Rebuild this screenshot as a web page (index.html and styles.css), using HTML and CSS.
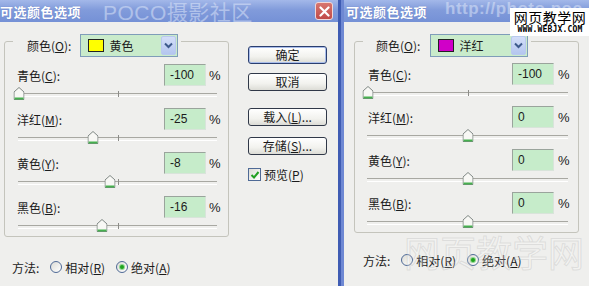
FILE: index.html
```html
<!DOCTYPE html>
<html lang="zh">

<head>
    <meta charset="UTF-8">
    <title>可选颜色选项</title>
    <link rel="stylesheet" href="styles.css">
</head>

<body>
    <div class="screen">
        <!-- 左侧对话框：黄色 -->
        <section class="dialog dialog-left">
            <header class="titlebar">
                <span class="title">可选颜色选项</span>
                <span class="watermark">POCO摄影社区</span>
                <span class="close-btn">
                    <svg width="11" height="11" viewBox="0 0 11 11"><path d="M1.5 1.5 L9.5 9.5 M9.5 1.5 L1.5 9.5" stroke="#fff" stroke-width="2.2" stroke-linecap="round"/></svg>
                </span>
            </header>
            <div class="dialog-body">
                <div class="main-col">
                    <div class="group">
                        <div class="group-head">
                            <span class="label">颜色(<u>O</u>):</span>
                            <div class="dropdown">
                                <span class="swatch swatch-yellow"></span>
                                <span class="dd-text">黄色</span>
                                <span class="dd-arrow">
                                    <svg width="9" height="7" viewBox="0 0 9 7"><path d="M1 1.5 L4.5 5 L8 1.5" stroke="#3d5a8c" stroke-width="2" fill="none"/></svg>
                                </span>
                            </div>
                        </div>
                        <div class="adjust">
                            <div class="adjust-row"><span class="label">青色(<u>C</u>):</span><span class="num">-100</span><span class="pct">%</span></div>
                            <div class="slider"><span class="tick"></span><span class="thumb" style="left: 0%"><svg width="11" height="13" viewBox="0 0 11 13"><path d="M0.5 5 L5.5 0.5 L10.5 5 V12.5 H0.5 Z" fill="#f8f8f5" stroke="#7f8784"/><path d="M1 11.5 H10" stroke="#46b04f" stroke-width="2"/></svg></span></div>
                        </div>
                        <div class="adjust">
                            <div class="adjust-row"><span class="label">洋红(<u>M</u>):</span><span class="num">-25</span><span class="pct">%</span></div>
                            <div class="slider"><span class="tick"></span><span class="thumb" style="left: 37.5%"><svg width="11" height="13" viewBox="0 0 11 13"><path d="M0.5 5 L5.5 0.5 L10.5 5 V12.5 H0.5 Z" fill="#f8f8f5" stroke="#7f8784"/><path d="M1 11.5 H10" stroke="#46b04f" stroke-width="2"/></svg></span></div>
                        </div>
                        <div class="adjust">
                            <div class="adjust-row"><span class="label">黄色(<u>Y</u>):</span><span class="num">-8</span><span class="pct">%</span></div>
                            <div class="slider"><span class="tick"></span><span class="thumb" style="left: 46%"><svg width="11" height="13" viewBox="0 0 11 13"><path d="M0.5 5 L5.5 0.5 L10.5 5 V12.5 H0.5 Z" fill="#f8f8f5" stroke="#7f8784"/><path d="M1 11.5 H10" stroke="#46b04f" stroke-width="2"/></svg></span></div>
                        </div>
                        <div class="adjust">
                            <div class="adjust-row"><span class="label">黑色(<u>B</u>):</span><span class="num">-16</span><span class="pct">%</span></div>
                            <div class="slider"><span class="tick"></span><span class="thumb" style="left: 42%"><svg width="11" height="13" viewBox="0 0 11 13"><path d="M0.5 5 L5.5 0.5 L10.5 5 V12.5 H0.5 Z" fill="#f8f8f5" stroke="#7f8784"/><path d="M1 11.5 H10" stroke="#46b04f" stroke-width="2"/></svg></span></div>
                        </div>
                    </div>
                    <div class="method">
                        <span class="method-label">方法:</span>
                        <span class="radio"></span><span class="radio-text">相对(<u>R</u>)</span>
                        <span class="radio radio-on"></span><span class="radio-text">绝对(<u>A</u>)</span>
                    </div>
                </div>
                <div class="buttons">
                    <button class="btn btn-default">确定</button>
                    <button class="btn">取消</button>
                    <button class="btn btn-gap">载入(<u>L</u>)...</button>
                    <button class="btn">存储(<u>S</u>)...</button>
                    <div class="preview">
                        <span class="check"><svg width="10" height="10" viewBox="0 0 10 10"><path d="M1.5 5 L4 7.5 L8.5 2" stroke="#22a022" stroke-width="2" fill="none"/></svg></span>
                        <span>预览(<u>P</u>)</span>
                    </div>
                </div>
            </div>
        </section>

        <!-- 右侧对话框：洋红 -->
        <section class="dialog dialog-right">
            <header class="titlebar">
                <span class="title">可选颜色选项</span>
                <span class="watermark watermark-url">http://photo.poc</span>
            </header>
            <div class="site-badge">
                <span class="badge-name">网页教学网</span>
                <span class="badge-url">WWW.WEBJX.COM</span>
            </div>
            <div class="dialog-body">
                <div class="main-col">
                    <div class="group">
                        <div class="group-head">
                            <span class="label">颜色(<u>O</u>):</span>
                            <div class="dropdown">
                                <span class="swatch swatch-magenta"></span>
                                <span class="dd-text">洋红</span>
                                <span class="dd-arrow">
                                    <svg width="9" height="7" viewBox="0 0 9 7"><path d="M1 1.5 L4.5 5 L8 1.5" stroke="#3d5a8c" stroke-width="2" fill="none"/></svg>
                                </span>
                            </div>
                        </div>
                        <div class="adjust">
                            <div class="adjust-row"><span class="label">青色(<u>C</u>):</span><span class="num">-100</span><span class="pct">%</span></div>
                            <div class="slider"><span class="tick"></span><span class="thumb" style="left: 0%"><svg width="11" height="13" viewBox="0 0 11 13"><path d="M0.5 5 L5.5 0.5 L10.5 5 V12.5 H0.5 Z" fill="#f8f8f5" stroke="#7f8784"/><path d="M1 11.5 H10" stroke="#46b04f" stroke-width="2"/></svg></span></div>
                        </div>
                        <div class="adjust">
                            <div class="adjust-row"><span class="label">洋红(<u>M</u>):</span><span class="num">0</span><span class="pct">%</span></div>
                            <div class="slider"><span class="tick"></span><span class="thumb" style="left: 50%"><svg width="11" height="13" viewBox="0 0 11 13"><path d="M0.5 5 L5.5 0.5 L10.5 5 V12.5 H0.5 Z" fill="#f8f8f5" stroke="#7f8784"/><path d="M1 11.5 H10" stroke="#46b04f" stroke-width="2"/></svg></span></div>
                        </div>
                        <div class="adjust">
                            <div class="adjust-row"><span class="label">黄色(<u>Y</u>):</span><span class="num">0</span><span class="pct">%</span></div>
                            <div class="slider"><span class="tick"></span><span class="thumb" style="left: 50%"><svg width="11" height="13" viewBox="0 0 11 13"><path d="M0.5 5 L5.5 0.5 L10.5 5 V12.5 H0.5 Z" fill="#f8f8f5" stroke="#7f8784"/><path d="M1 11.5 H10" stroke="#46b04f" stroke-width="2"/></svg></span></div>
                        </div>
                        <div class="adjust">
                            <div class="adjust-row"><span class="label">黑色(<u>B</u>):</span><span class="num">0</span><span class="pct">%</span></div>
                            <div class="slider"><span class="tick"></span><span class="thumb" style="left: 50%"><svg width="11" height="13" viewBox="0 0 11 13"><path d="M0.5 5 L5.5 0.5 L10.5 5 V12.5 H0.5 Z" fill="#f8f8f5" stroke="#7f8784"/><path d="M1 11.5 H10" stroke="#46b04f" stroke-width="2"/></svg></span></div>
                        </div>
                    </div>
                    <div class="method">
                        <span class="method-label">方法:</span>
                        <span class="radio"></span><span class="radio-text">相对(<u>R</u>)</span>
                        <span class="radio radio-on"></span><span class="radio-text">绝对(<u>A</u>)</span>
                    </div>
                </div>
            </div>
            <div class="ghost-mark">网页教学网</div>
        </section>
    </div>
</body>

</html>
```

FILE: styles.css
```css
* {
    margin: 0;
    padding: 0;
    box-sizing: border-box;
}

body {
    width: 589px;
    height: 286px;
    overflow: hidden;
    background: #efefed;
    font-family: "Liberation Sans", "Noto Sans CJK SC", sans-serif;
    font-size: 12px;
    color: #1b1b1b;
}

u {
    text-decoration-thickness: 1px;
    text-underline-offset: 1px;
}

.screen {
    display: flex;
    height: 286px;
}

/* 对话框 */
.dialog {
    position: relative;
    display: flex;
    flex-direction: column;
    height: 286px;
    background: #efefed;
    overflow: hidden;
}

.dialog-left {
    width: 341px;
    flex: none;
    border-right: 3px solid #3f5cb3;
}

.dialog-right {
    flex: 1;
    border-left: 3px solid #6e88d3;
}

.titlebar {
    display: flex;
    align-items: center;
    height: 22px;
    flex: none;
    background: linear-gradient(#a3b8e9 0%, #819bdb 45%, #7591d6 100%);
    color: #fff;
    white-space: nowrap;
}

.title {
    font-family: "Noto Sans CJK SC", sans-serif;
    font-size: 13px;
    font-weight: bold;
    letter-spacing: 0.5px;
    text-shadow: 0 0 1px #5a73b8;
}

.dialog-right .title {
    margin-left: 2px;
}

.watermark {
    margin-left: 22px;
    font-family: "Liberation Sans", "Noto Sans CJK SC", sans-serif;
    font-size: 21px;
    color: rgba(226, 234, 250, 0.5);
    letter-spacing: 0.5px;
}

.watermark-url {
    align-self: flex-start;
    margin-left: 18px;
    font-size: 17px;
    line-height: 17px;
    font-weight: bold;
}

.close-btn {
    display: flex;
    align-items: center;
    justify-content: center;
    width: 18px;
    height: 18px;
    margin-left: auto;
    margin-right: 5px;
    border: 1px solid #f0d8d8;
    border-radius: 3px;
    background: linear-gradient(#d8766f, #c04a48);
}

.dialog-body {
    display: flex;
    align-items: flex-start;
    padding: 19px 0 0 4px;
}

.dialog-right .dialog-body {
    padding-left: 10px;
}

/* 分组框 */
.main-col {
    width: 225px;
    flex: none;
}

.group {
    border: 1px solid #c4c4bc;
    border-radius: 3px;
}

.group-head {
    display: flex;
    align-items: center;
    gap: 9px;
    width: fit-content;
    height: 23px;
    margin: -8px 0 0 8px;
    padding: 0 3px 0 14px;
    background: #efefed;
}

.dialog-right .group-head {
    gap: 10px;
    padding-left: 13px;
}

.label {
    font-family: "Noto Sans CJK SC", sans-serif;
    white-space: nowrap;
}

.dropdown {
    display: flex;
    align-items: center;
    width: 98px;
    height: 23px;
    padding: 1px;
    border: 1px solid #7f9db9;
    background: #c9ebcb;
}

.swatch {
    width: 16px;
    height: 13px;
    margin-left: 6px;
    border: 1px solid #222;
}

.swatch-yellow {
    background: #ffff00;
}

.swatch-magenta {
    background: #d000c8;
}

.dd-text {
    margin-left: 5px;
    font-family: "Noto Sans CJK SC", sans-serif;
}

.dd-arrow {
    display: flex;
    align-items: center;
    justify-content: center;
    width: 15px;
    height: 19px;
    margin-left: auto;
    border: 1px solid #b9c9ee;
    border-radius: 2px;
    background: linear-gradient(#d3def8, #b4c6ef);
}

/* 调整行 */
.group-head + .adjust {
    margin-top: 7px;
}

.adjust + .adjust {
    margin-top: 4px;
}

.dialog-right .group-head + .adjust {
    margin-top: 6px;
}

.dialog-right .adjust + .adjust {
    margin-top: 3px;
}

.adjust-row {
    display: flex;
    align-items: center;
    height: 22px;
    padding: 0 7px 0 12px;
}

.dialog-right .adjust-row {
    padding: 0 8px 0 13px;
}

.adjust-row .label {
    flex: 1;
}

.num {
    width: 42px;
    height: 22px;
    padding: 3px 0 0 5px;
    border: 1px solid #9aa49c;
    border-right-color: #d8e4da;
    border-bottom-color: #d8e4da;
    background: #c6ecca;
    font-size: 12px;
}

.pct {
    width: 12px;
    margin-left: 3px;
    font-size: 13px;
}

.dialog-right .pct {
    margin-left: 4px;
}

.slider {
    position: relative;
    height: 18px;
    margin: 0 12px 0 14px;
}

.dialog-right .slider {
    margin: 0 11px 0 13px;
}

.slider::before {
    content: "";
    position: absolute;
    left: -1px;
    right: -1px;
    top: 7px;
    height: 2px;
    border-top: 1px solid #a8a8a2;
    border-bottom: 1px solid #ffffff;
}

.tick {
    position: absolute;
    left: 50%;
    top: 5px;
    width: 1px;
    height: 6px;
    background: #8c8c88;
}

.thumb {
    position: absolute;
    top: 1px;
    width: 11px;
    height: 13px;
    transform: translateX(-50%);
}

.thumb svg {
    display: block;
}

/* 方法 */
.method {
    display: flex;
    align-items: center;
    height: 16px;
    margin-top: 22px;
    padding-left: 8px;
    font-family: "Noto Sans CJK SC", sans-serif;
}

.dialog-right .method {
    margin-top: 19px;
    padding-left: 9px;
}

.method-label {
    margin-right: 11px;
}

.radio {
    display: flex;
    align-items: center;
    justify-content: center;
    width: 12px;
    height: 12px;
    border: 1px solid #4f6a96;
    border-radius: 50%;
    background: linear-gradient(135deg, #dcdcd6, #ffffff);
}

.radio-on::after {
    content: "";
    width: 4px;
    height: 4px;
    border-radius: 50%;
    background: #1fa21f;
    box-shadow: 0 0 0 1px #8fd88f;
}

.radio-text {
    margin: 0 11px 0 3px;
}

/* 按钮 */
.buttons {
    display: flex;
    flex-direction: column;
    width: 79px;
    margin: 5px 0 0 19px;
}

.btn {
    height: 18px;
    margin-bottom: 9px;
    border: 1px solid #303848;
    border-radius: 3px;
    background: linear-gradient(#ffffff, #f2f2ee 60%, #dcdcd6);
    font-family: "Noto Sans CJK SC", sans-serif;
    font-size: 12px;
    line-height: 14px;
    color: #1b1b1b;
}

.btn-default {
    border-color: #2a3e70;
    box-shadow: inset 0 0 0 1px #a9bdea;
}

.btn-gap {
    margin-top: 8px;
    margin-bottom: 11px;
}

.preview {
    display: flex;
    align-items: center;
    gap: 3px;
    margin-top: 2px;
    font-family: "Noto Sans CJK SC", sans-serif;
}

.check {
    display: flex;
    align-items: center;
    justify-content: center;
    width: 13px;
    height: 13px;
    border: 1px solid #4f6a96;
    background: linear-gradient(135deg, #dcdcd6, #ffffff);
}

/* 水印 */
.site-badge {
    position: absolute;
    top: 8px;
    left: 166px;
    display: flex;
    flex-direction: column;
    align-items: center;
    width: 80px;
    padding: 1px 0 1px;
    background: #ffffff;
    color: #000;
}

.badge-name {
    font-family: "Noto Sans CJK SC", sans-serif;
    font-size: 14px;
    line-height: 16px;
    letter-spacing: 0.5px;
}

.badge-url {
    font-family: "DejaVu Sans Mono", monospace;
    font-size: 8px;
    font-weight: bold;
    line-height: 10px;
    letter-spacing: 0.2px;
}

.ghost-mark {
    position: absolute;
    left: 60px;
    top: 230px;
    font-family: "Noto Sans CJK SC", sans-serif;
    font-size: 36px;
    line-height: 42px;
    color: rgba(255, 255, 255, 0.2);
    -webkit-text-stroke: 1px rgba(175, 175, 175, 0.3);
    white-space: nowrap;
    pointer-events: none;
}
```
